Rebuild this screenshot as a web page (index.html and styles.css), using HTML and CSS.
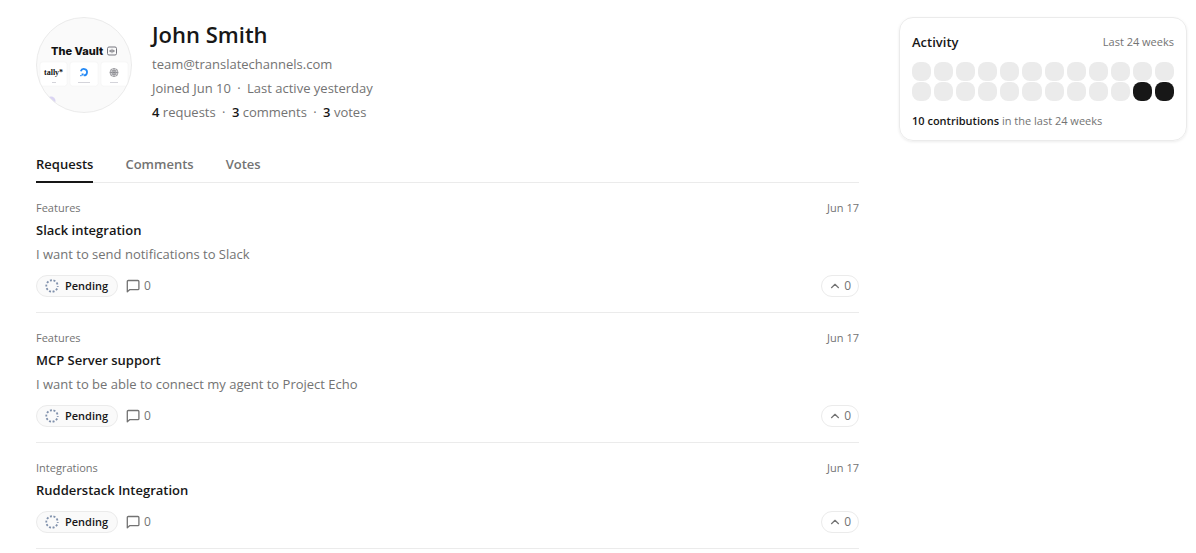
FILE: index.html
```html
<!DOCTYPE html>
<html lang="en">
<head>
  <meta charset="UTF-8" />
  <meta name="viewport" content="width=device-width, initial-scale=1.0"/>
  <title>John Smith</title>
  <link rel="stylesheet" href="styles.css">
</head>
<body>
  <!-- Shared icons -->
  <svg class="sprite" aria-hidden="true">
    <symbol id="icon-pending" viewBox="0 0 14 14">
      <circle cx="7" cy="7" r="5.73" fill="none" stroke="#8091ac" stroke-width="1.8" stroke-dasharray="2 1.6" stroke-dashoffset="1"/>
    </symbol>
    <symbol id="icon-comment" viewBox="0 0 14 14">
      <path d="M2.3 1.5h9.6a1 1 0 0 1 1 1v7.2a1 1 0 0 1-1 1H3.6l-2.3 2V2.5a1 1 0 0 1 1-1z" fill="none" stroke="currentColor" stroke-width="1.3" stroke-linejoin="round"/>
    </symbol>
    <symbol id="icon-up" viewBox="0 0 10 10">
      <path d="M1.5 6.7L5 3.3l3.5 3.4" fill="none" stroke="currentColor" stroke-width="1.2" stroke-linecap="round" stroke-linejoin="round"/>
    </symbol>
  </svg>

  <div class="page">
    <main class="main">
      <header class="profile">
        <svg class="avatar" viewBox="0 0 96 96" role="img" aria-label="The Vault">
          <defs>
            <clipPath id="avatarClip"><circle cx="48" cy="48" r="47.5"/></clipPath>
          </defs>
          <g clip-path="url(#avatarClip)">
            <rect width="96" height="96" fill="#fafafa"/>
            <text class="logo-title" x="15" y="38">The Vault</text>
            <rect x="71.5" y="30" width="9" height="8" rx="1.5" fill="none" stroke="#77777f" stroke-width="1"/>
            <path d="M73 34h6M74.7 32.8v2.4M76 31.8v4.4M77.3 32.8v2.4" stroke="#77777f" stroke-width="0.8"/>
            <g fill="#fff" stroke="#f0f0f0" stroke-width="0.5">
              <rect x="4" y="45" width="27" height="24" rx="2.5"/>
              <rect x="34" y="45" width="28" height="24" rx="2.5"/>
              <rect x="65" y="45" width="27" height="24" rx="2.5"/>
            </g>
            <text class="logo-tally" x="8" y="58">tally*</text>
            <path d="M44.8 54.2a3.2 3.2 0 1 1 3 4.2" fill="none" stroke="#2489f5" stroke-width="1.8"/>
            <path d="M45.6 56.5h2v2h-2zM44.2 58h1.3v1.3h-1.3z" fill="#2489f5"/>
            <g fill="none" stroke="#85858c" stroke-width="0.8">
              <circle cx="78" cy="55.5" r="4"/>
              <circle cx="78" cy="55.5" r="2.3"/>
              <path d="M74 55.5h8M78 51.5v8M75.2 52.7l5.6 5.6M80.8 52.7l-5.6 5.6"/>
            </g>
            <path d="M16 65.5h4M42 65.5h12M74 65.5h8" stroke="#d4d4da" stroke-width="1"/>
            <circle cx="15" cy="84" r="4.5" fill="#dad4f3"/>
          </g>
          <circle cx="48" cy="48" r="47.5" fill="none" stroke="#ebebeb"/>
        </svg>
        <div class="profile-info">
          <h1>John Smith</h1>
          <p>team@translatechannels.com</p>
          <p>Joined Jun 10 <span class="dot">·</span> Last active yesterday</p>
          <p><strong>4</strong> requests <span class="dot">·</span> <strong>3</strong> comments <span class="dot">·</span> <strong>3</strong> votes</p>
        </div>
      </header>

      <nav class="tabs">
        <a href="#requests" class="tab active">Requests</a>
        <a href="#comments" class="tab">Comments</a>
        <a href="#votes" class="tab">Votes</a>
      </nav>

      <section class="requests" id="requests">
        <article class="request">
          <div class="request-meta"><span>Features</span><span>Jun 17</span></div>
          <h2>Slack integration</h2>
          <p>I want to send notifications to Slack</p>
          <div class="request-footer">
            <span class="status"><svg class="icon"><use href="#icon-pending"/></svg>Pending</span>
            <span class="comments"><svg class="icon"><use href="#icon-comment"/></svg>0</span>
            <button class="vote" aria-label="Upvote Slack integration"><svg class="icon-small"><use href="#icon-up"/></svg>0</button>
          </div>
        </article>

        <article class="request">
          <div class="request-meta"><span>Features</span><span>Jun 17</span></div>
          <h2>MCP Server support</h2>
          <p>I want to be able to connect my agent to Project Echo</p>
          <div class="request-footer">
            <span class="status"><svg class="icon"><use href="#icon-pending"/></svg>Pending</span>
            <span class="comments"><svg class="icon"><use href="#icon-comment"/></svg>0</span>
            <button class="vote" aria-label="Upvote MCP Server support"><svg class="icon-small"><use href="#icon-up"/></svg>0</button>
          </div>
        </article>

        <article class="request">
          <div class="request-meta"><span>Integrations</span><span>Jun 17</span></div>
          <h2>Rudderstack Integration</h2>
          <div class="request-footer">
            <span class="status"><svg class="icon"><use href="#icon-pending"/></svg>Pending</span>
            <span class="comments"><svg class="icon"><use href="#icon-comment"/></svg>0</span>
            <button class="vote" aria-label="Upvote Rudderstack Integration"><svg class="icon-small"><use href="#icon-up"/></svg>0</button>
          </div>
        </article>
      </section>
    </main>

    <aside class="activity">
      <div class="activity-header">
        <h2>Activity</h2>
        <span>Last 24 weeks</span>
      </div>
      <div class="weeks">
        <i></i><i></i><i></i><i></i><i></i><i></i><i></i><i></i><i></i><i></i><i></i><i></i>
        <i></i><i></i><i></i><i></i><i></i><i></i><i></i><i></i><i></i><i></i><i class="on"></i><i class="on"></i>
      </div>
      <p><strong>10 contributions</strong> in the last 24 weeks</p>
    </aside>
  </div>
</body>
</html>
```
FILE: styles.css
```css
* {
  box-sizing: border-box;
}

body {
  margin: 0;
  background: #fff;
  color: #171717;
  font-family: "Segoe UI", "Open Sans", "Noto Sans", sans-serif;
  font-size: 13px;
  line-height: 24px;
}

h1,
h2,
p {
  margin: 0;
}

strong {
  font-weight: 600;
  color: #171717;
}

.sprite {
  display: none;
}

.page {
  display: flex;
  align-items: flex-start;
  gap: 40px;
  padding: 17px 9px 0 36px;
}

.main {
  flex: 1;
  min-width: 0;
}

.profile {
  display: flex;
  gap: 20px;
  color: #737373;
}

.avatar {
  width: 96px;
  height: 96px;
  flex-shrink: 0;
}

.logo-title {
  font-family: Inter, sans-serif;
  font-size: 11px;
  font-weight: 800;
  fill: #111;
}

.logo-tally {
  font-family: "Liberation Serif", serif;
  font-size: 8px;
  font-weight: 700;
  fill: #111;
}

h1 {
  font-size: 22px;
  line-height: 35px;
  font-weight: 600;
  color: #171717;
}

.dot {
  margin: 0 3px;
}

.tabs {
  display: flex;
  gap: 32px;
  margin-top: 23px;
  border-bottom: 1px solid #ebebeb;
}

.tab {
  padding: 5px 0;
  margin-bottom: -1px;
  border-bottom: 2px solid transparent;
  color: #737373;
  font-weight: 600;
  text-decoration: none;
}

.tab.active {
  color: #171717;
  border-color: #171717;
}

.request {
  padding: 15px 0;
  border-bottom: 1px solid #ebebeb;
}

.request-meta {
  display: flex;
  justify-content: space-between;
  font-size: 11px;
  line-height: 20px;
  color: #737373;
}

h2 {
  font-size: 13px;
  font-weight: 600;
}

.request p {
  color: #737373;
}

.request-footer {
  display: flex;
  align-items: center;
  gap: 8px;
  margin-top: 9px;
  font-size: 12px;
  line-height: 20px;
  color: #737373;
}

.status,
.comments,
.vote {
  display: flex;
  align-items: center;
}

.status {
  gap: 6px;
  padding: 0 9px 0 8px;
  border: 1px solid #ebebeb;
  border-radius: 11px;
  background: #fafafa;
  color: #171717;
  font-size: 11px;
  font-weight: 600;
}

.comments {
  gap: 4px;
}

.vote {
  gap: 4px;
  margin-left: auto;
  padding: 0 7px 0 8px;
  border: 1px solid #ebebeb;
  border-radius: 11px;
  background: #fff;
  color: #737373;
  font: inherit;
  cursor: pointer;
}

.icon {
  width: 14px;
  height: 14px;
}

.icon-small {
  width: 10px;
  height: 10px;
}

.activity {
  width: 288px;
  padding: 12px 12px 10px;
  border: 1px solid #ebebeb;
  border-radius: 14px;
  box-shadow: 0 1px 3px rgba(0, 0, 0, 0.08);
  font-size: 11px;
  color: #737373;
}

.activity-header {
  display: flex;
  justify-content: space-between;
}

.activity h2 {
  color: #171717;
}

.activity p {
  line-height: 18px;
}

.weeks {
  display: grid;
  grid-template-columns: repeat(12, 1fr);
  gap: 1px 3px;
  margin: 8px 0 11px;
}

.weeks i {
  height: 19px;
  border-radius: 8px;
  background: #ebebeb;
}

.weeks .on {
  background: #171717;
}

@media screen and (max-width: 768px) {
  .page {
    flex-direction: column;
    padding-right: 36px;
  }

  .main,
  .activity {
    width: 100%;
  }
}
```
